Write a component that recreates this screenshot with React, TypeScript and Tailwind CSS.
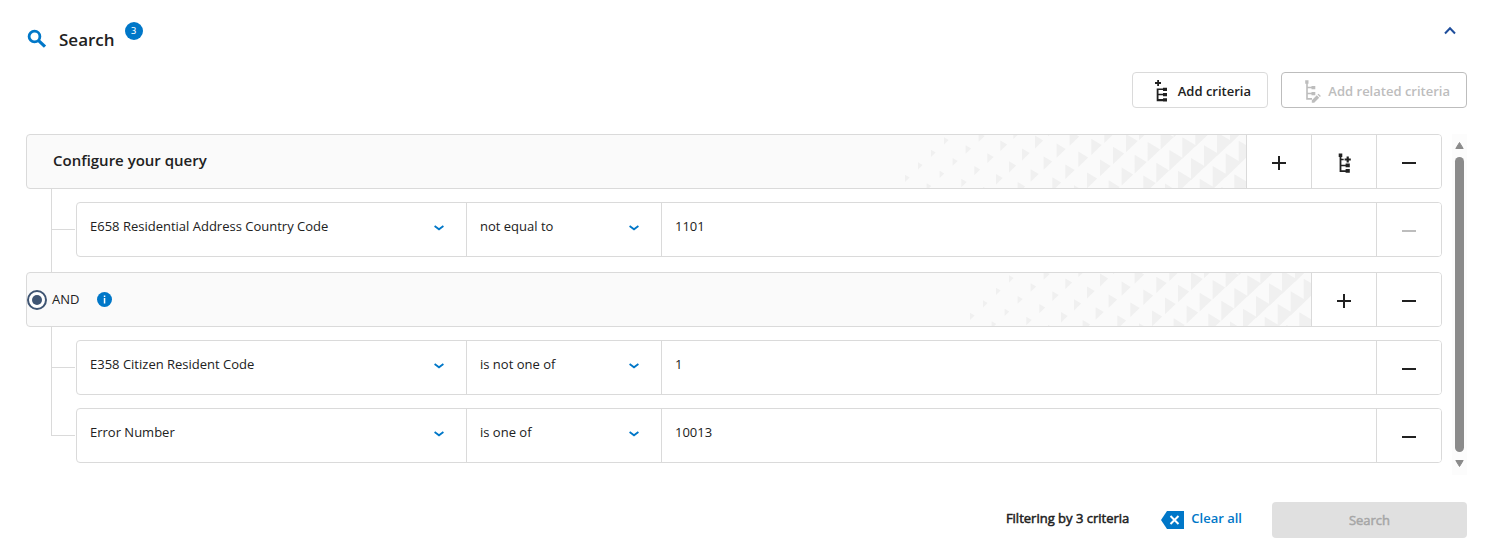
import { useState } from "react";
import clsx from "clsx";

type Row = { field: string; op: string; value: string; locked?: boolean };

const ROOT_ROWS: Row[] = [
  { field: "E658 Residential Address Country Code", op: "not equal to", value: "1101", locked: true },
];
const AND_ROWS: Row[] = [
  { field: "E358 Citizen Resident Code", op: "is not one of", value: "1" },
  { field: "Error Number", op: "is one of", value: "10013" },
];

// triangles on a slanted lattice, growing towards the right edge
const TRIANGLES = buildTriangles();

function buildTriangles() {
  const out: string[] = [];
  for (let i = -12; i < 30; i++) {
    for (let j = 0; j < 24; j++) {
      const x = i * 13 + j * 21.67;
      const y = 42.5 - i * 12.5 + j * 8.5;
      if (x < 0 || x > 342 || y < -14 || y > 66) continue;
      const w = Math.max(4.6, Math.min(15.5, 3.2 + x * 0.0385));
      out.push(`M${x} ${y - w * 0.6}L${x + w} ${y}L${x} ${y + w * 0.96}Z`);
    }
  }
  return out.join("");
}

function Pattern() {
  return (
    <svg width="341" height="53" viewBox="0 0 341 53" className="shrink-0" aria-hidden="true">
      <path d={TRIANGLES} fill="#f0f0f0" />
    </svg>
  );
}

function SearchIcon() {
  return (
    <svg width="20" height="20" viewBox="0 0 20 20" fill="none" stroke="#0077c8" aria-hidden="true">
      <circle cx="7.5" cy="7.5" r="5.4" strokeWidth="2.8" />
      <path d="M11.6 11.6 18 17.6" strokeWidth="3.2" />
    </svg>
  );
}

function TreeAddIcon() {
  return (
    <svg width="14" height="22" viewBox="0 0 14 22" fill="currentColor" aria-hidden="true">
      <path d="M2.200 0h1.800v2.100H6v1.800H4V6H2.200V3.900H0V2.100h2.200z" />
      <path d="M1.700 8.400H8v-.7h4v3.200H8v-.9H3.500v3.700H8V13h4v3.200H8v-.9H3.500V19H8v-.7h4v3.200H8v-.3H1.700z" />
    </svg>
  );
}

function TreeEditIcon() {
  return (
    <svg width="17" height="23" viewBox="0 0 17 23" fill="currentColor" aria-hidden="true">
      <path d="M1.200.3h3.300v3.400h-.7v3.100h3.700V6h3.800v3.200H7.500v-.9H3.800v4.500h3.700V12h3.800v3.200H7.500v-.9H3.800v3.800h4.200v1.600H2.200v-16h-1z" />
      <path d="M7.800 22.700v-2.400l5-5 2.400 2.400-5 5zM13.500 14.600l1-.9 2.400 2.400-1 .9z" />
    </svg>
  );
}

function TreeGroupIcon() {
  return (
    <svg width="14" height="20" viewBox="0 0 14 20" fill="currentColor" aria-hidden="true">
      <path d="M1.700.6h3.600V4h-.9v1.700h2.300v1.500H4.400v4.600h4.200v-1.200h4.200v3.600H8.600v-.9H4.400v3.900h4.200v-1.100h4.200v3.600H8.600v-.6h-6V4h-.9z" />
      <path d="M9.600 3.500h2.200v1.900h2v2.200h-2v1.900H9.600V7.600h-2V5.400h2z" />
    </svg>
  );
}

function PlusIcon() {
  return (
    <svg width="14" height="14" viewBox="0 0 14 14" fill="currentColor" aria-hidden="true">
      <path d="M6 0h2v6h6v2H8v6H6V8H0V6h6z" />
    </svg>
  );
}

function MinusIcon() {
  return (
    <svg width="14" height="14" viewBox="0 0 14 14" fill="currentColor" aria-hidden="true">
      <path d="M0 6h14v2H0z" />
    </svg>
  );
}

function ClearIcon() {
  return (
    <svg width="23" height="18" viewBox="0 0 23 18" aria-hidden="true">
      <path d="M6 0h17v18H6L0 9z" fill="#0077c8" />
      <path d="m9.500 5 8 8m0-8-8 8" stroke="#fff" strokeWidth="2" />
    </svg>
  );
}

function CellButton({ label, disabled, children }: { label: string; disabled?: boolean; children: React.ReactNode }) {
  return (
    <button
      type="button"
      aria-label={label}
      disabled={disabled}
      className={clsx(
        "flex w-[65px] shrink-0 items-center justify-center border-l border-[#dadada] bg-white pt-[2px]",
        disabled ? "text-[#bdbdbd]" : "text-[#212121]",
      )}
    >
      {children}
    </button>
  );
}

function SelectCell({ label, value, className }: { label: string; value: string; className: string }) {
  return (
    <div className={clsx("relative shrink-0 border-r border-[#dadada]", className)}>
      <select
        aria-label={label}
        defaultValue={value}
        className="h-full w-full appearance-none bg-transparent pb-[6px] pl-[13px] pr-10 outline-none"
      >
        <option>{value}</option>
      </select>
      <svg
        width="10"
        height="6"
        viewBox="0 0 10 6"
        fill="none"
        className="pointer-events-none absolute right-[22px] top-[22px]"
        aria-hidden="true"
      >
        <path d="M.6 1 5 4.300 9.400 1" stroke="#0077c8" strokeWidth="1.800" />
      </svg>
    </div>
  );
}

function CriteriaRow({ row, last }: { row: Row; last: boolean }) {
  return (
    <li
      className={clsx(
        "relative pl-[25px] pt-[13px] before:absolute before:left-0 before:top-0 before:h-[41px] before:w-6 before:border-b before:border-l before:border-[#dadada]",
        !last && "after:absolute after:inset-y-0 after:left-0 after:w-px after:bg-[#dadada]",
      )}
    >
      <div className="flex h-[55px] overflow-hidden rounded border border-[#dadada] bg-white">
        <SelectCell label="Field" value={row.field} className="w-[390px]" />
        <SelectCell label="Operator" value={row.op} className="w-[195px]" />
        <input
          aria-label="Value"
          defaultValue={row.value}
          className="min-w-0 flex-1 bg-transparent pb-[6px] pl-[13px] outline-none"
        />
        <CellButton label="Remove criteria" disabled={row.locked}>
          <MinusIcon />
        </CellButton>
      </div>
    </li>
  );
}

export default function App() {
  const [and, setAnd] = useState(true);

  return (
    <main className="bg-white pb-[9px] pl-[26px] pr-[18px] font-['Open_Sans','Noto_Sans',sans-serif] text-[13px] text-[#212121]">
      <header className="flex h-[72px] items-start justify-between pt-[22px]">
        <div className="flex items-start pl-px">
          <div className="pt-[7px]">
            <SearchIcon />
          </div>
          <h1 className="ml-3 mt-[6px] text-[17px] font-semibold leading-6">Search</h1>
          <span className="ml-[10px] flex size-[18px] items-center justify-center rounded-full bg-[#0077c8] pt-px font-['DejaVu_Sans',sans-serif] text-[9px] text-white">
            3
          </span>
        </div>
        <button type="button" aria-label="Collapse" className="mr-[11px] pt-[4px]">
          <svg width="12" height="9" viewBox="0 0 12 9" fill="none" aria-hidden="true">
            <path d="M1 7.500 6 2.300l5 5.200" stroke="#1f4e9c" strokeWidth="2" />
          </svg>
        </button>
      </header>

      <div className="flex justify-end gap-[13px]">
        <button
          type="button"
          className="flex h-9 w-[136px] items-center justify-end gap-[9px] rounded border border-[#dadada] pr-4 pt-[2px] font-semibold"
        >
          <TreeAddIcon />
          <span className="pt-[2px]">Add criteria</span>
        </button>
        <button
          type="button"
          disabled
          className="flex h-9 w-[186px] items-center justify-end gap-[7px] rounded border border-[#bdbdbd] pr-4 pt-[2px] font-semibold text-[#bdbdbd]"
        >
          <TreeEditIcon />
          <span className="pt-[2px]">Add related criteria</span>
        </button>
      </div>

      <div className="mt-[26px] flex gap-[10px]">
        <div className="min-w-0 flex-1">
          <div className="flex h-[55px] overflow-hidden rounded border border-[#dadada] bg-[#fafafa]">
            <h2 className="flex-1 self-center pb-[3px] pl-[26px] text-[15px] font-semibold">Configure your query</h2>
            <Pattern />
            <CellButton label="Add criteria">
              <PlusIcon />
            </CellButton>
            <CellButton label="Add group">
              <TreeGroupIcon />
            </CellButton>
            <CellButton label="Remove all">
              <MinusIcon />
            </CellButton>
          </div>
          <ul className="ml-[25px]">
            {ROOT_ROWS.map((r) => (
              <CriteriaRow key={r.field} row={r} last={false} />
            ))}
          </ul>
          <div className="ml-[25px] h-[15px] border-l border-[#dadada]" />

          <div className="flex h-[55px] overflow-hidden rounded border border-[#dadada] bg-[#fafafa]">
            <div className="flex flex-1 items-center">
              <label className="flex items-center gap-[5px]">
                <input
                  type="radio"
                  checked={and}
                  onChange={() => setAnd(true)}
                  className="size-5 appearance-none rounded-full border-2 border-[#3f5573] bg-white p-[3px] before:block before:size-full before:rounded-full checked:before:bg-[#3f5573]"
                />
                AND
              </label>
              <svg width="15" height="15" viewBox="0 0 15 15" className="ml-[18px]" aria-hidden="true">
                <circle cx="7.500" cy="7.500" r="7.500" fill="#0077c8" />
                <path d="M6.800 3.400h1.500v1.500H6.800zM6.800 6h1.500v5.500H6.800z" fill="#fff" />
              </svg>
            </div>
            <Pattern />
            <CellButton label="Add criteria to group">
              <PlusIcon />
            </CellButton>
            <CellButton label="Remove group">
              <MinusIcon />
            </CellButton>
          </div>
          <ul className="ml-[25px]">
            {AND_ROWS.map((r, i) => (
              <CriteriaRow key={r.field} row={r} last={i === AND_ROWS.length - 1} />
            ))}
          </ul>
          <div className="h-3" />
        </div>

        <div className="flex w-[15px] flex-col items-center bg-[#fcfcfc] py-[7px]" aria-hidden="true">
          <svg width="9" height="9" viewBox="0 0 9 9">
            <path d="M4.500 1.500 8.200 7.500H.8z" fill="#8b8b8b" stroke="#8b8b8b" strokeLinejoin="round" />
          </svg>
          <div className="my-[7px] w-[9px] flex-1 rounded-full bg-[#8b8b8b]" />
          <svg width="9" height="9" viewBox="0 0 9 9">
            <path d="M4.500 7.500 8.200 1.500H.8z" fill="#8b8b8b" stroke="#8b8b8b" strokeLinejoin="round" />
          </svg>
        </div>
      </div>

      <footer className="mt-[27px] flex items-center justify-end">
        <p className="pb-[3px] [-webkit-text-stroke:0.5px_#212121]">Filtering by 3 criteria</p>
        <button type="button" className="ml-8 flex items-center gap-[7px] font-semibold text-[#0077c8]">
          <ClearIcon />
          <span className="pb-[3px]">Clear all</span>
        </button>
        <button
          type="submit"
          disabled
          className="ml-[30px] h-9 w-[195px] rounded bg-[#e0e0e0] pt-[2px] text-[#a6a6a6] [-webkit-text-stroke:0.5px_#a6a6a6]"
        >
          Search
        </button>
      </footer>
    </main>
  );
}
